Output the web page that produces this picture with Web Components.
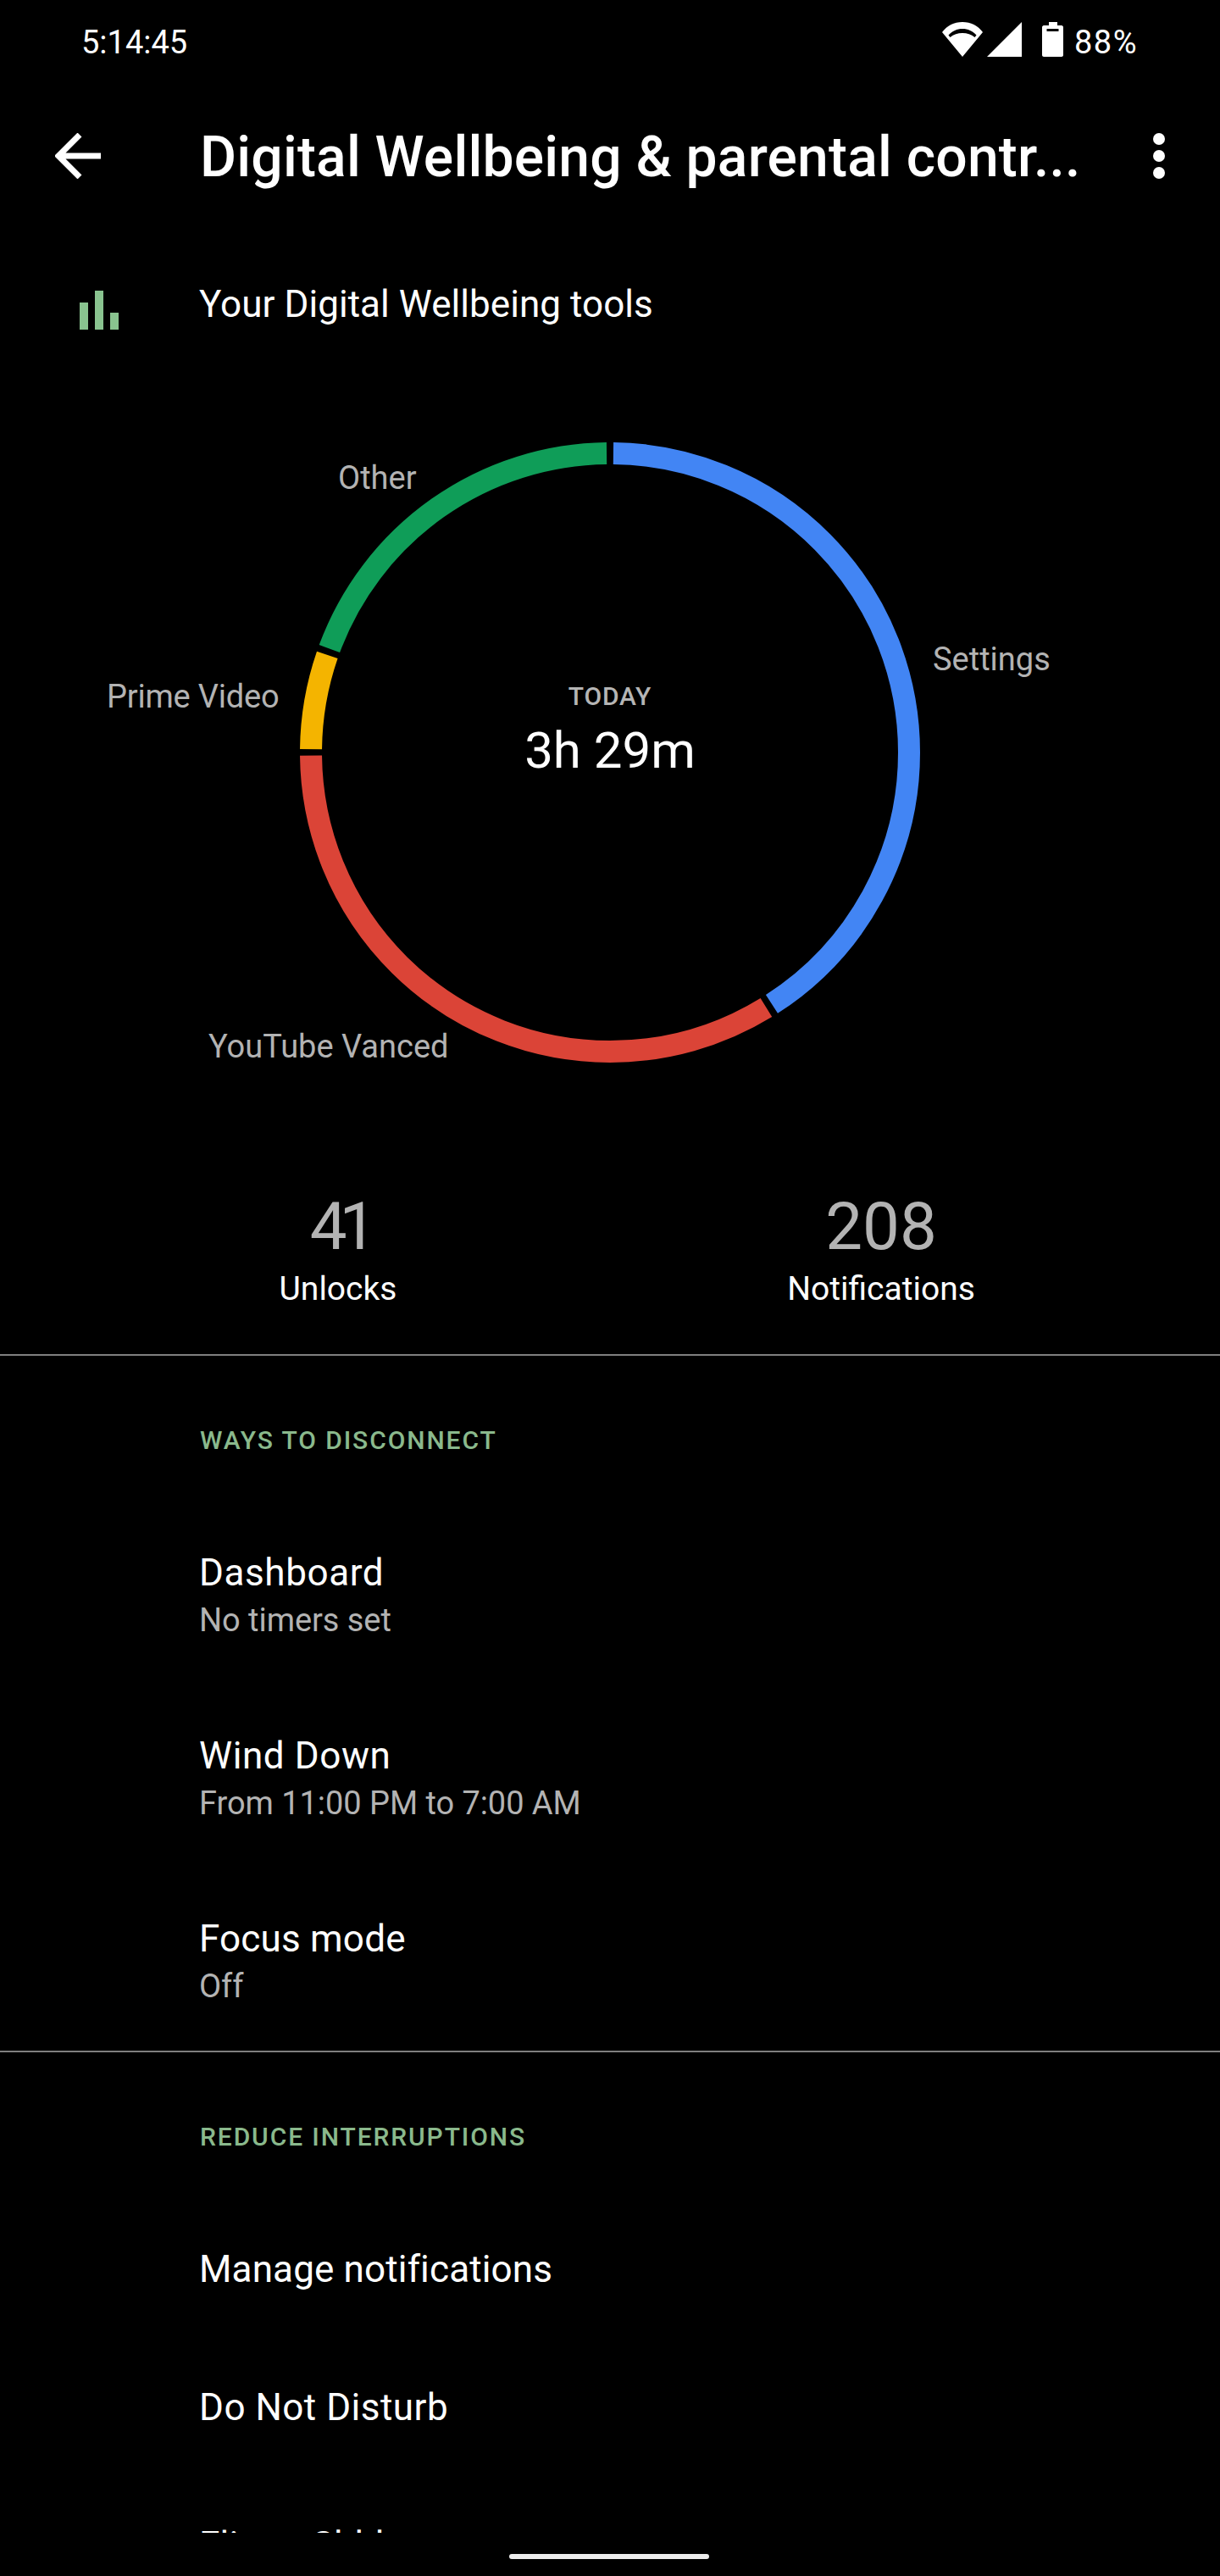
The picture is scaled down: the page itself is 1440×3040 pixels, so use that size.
<!DOCTYPE html>
<html><head><meta charset="utf-8"><style>
html,body{margin:0;padding:0;background:#000;}
body{width:1440px;height:3040px;overflow:hidden;font-family:Roboto,sans-serif;color:#fff;}
</style></head><body>
<app-screen>
<status-bar></status-bar>
<app-bar title-text="Digital Wellbeing &amp; parental contr..."></app-bar>
<tools-header></tools-header>
<usage-ring></usage-ring>
<stat-row></stat-row>
<section-block heading="WAYS TO DISCONNECT">
<setting-row title="Dashboard" sub="No timers set" style="--ls:.6px"></setting-row>
<setting-row title="Wind Down" sub="From 11:00 PM to 7:00 AM" style="--ls:.6px"></setting-row>
<setting-row title="Focus mode" sub="Off"></setting-row>
</section-block>
<section-block heading="REDUCE INTERRUPTIONS">
<setting-row title="Manage notifications" style="--ls:.15px"></setting-row>
<setting-row title="Do Not Disturb" style="--ls:.5px"></setting-row>
<setting-row title="Flip to Shhh"></setting-row>
</section-block>
</app-screen>
<script>
function def(name, html){
  customElements.define(name, class extends HTMLElement{
    connectedCallback(){
      if(this.shadowRoot) return;
      const r=this.attachShadow({mode:'open'});
      r.innerHTML = typeof html==='function'?html(this):html;
    }
  });
}
const esc=s=>String(s||'').replace(/&/g,'&amp;').replace(/</g,'&lt;');
def('app-screen',`<style>:host{display:block;width:1440px;height:3040px;position:relative;overflow:hidden;background:#000}
.clip{height:2989px;overflow:hidden}
.pill{position:absolute;left:601px;top:3014px;width:236px;height:6px;border-radius:3px;background:#ececec}
</style><div class="clip"><slot></slot></div><div class="pill"></div>`);
def('status-bar',`<style>:host{display:flex;align-items:center;justify-content:space-between;height:100px;padding:0 97px 0 96px;box-sizing:border-box;font:400 38px/1 Roboto,sans-serif;color:#fff}
.r{display:flex;align-items:center}
svg{display:block;margin-bottom:7px}
.p{letter-spacing:1.500px}
</style><span>5:14:45</span><div class="r">
<svg width="48" height="41" viewBox="0 0 48 41" style="margin-right:5px"><path fill="#fff" fill-rule="evenodd" d="M24 41 0 12C6 4 14 0 24 0S42 4 48 12ZM7.500 15.500C12 10.500 17.500 8 24 8S36 10.500 40.500 15.500L38.500 18C34.500 14.500 29.500 13 24 13S13.500 14.500 9.500 18Z"/></svg>
<svg width="41" height="41" viewBox="0 0 41 41" style="margin-right:24px"><path fill="#fff" d="M41 0v41H0Z"/></svg>
<svg width="25" height="41" viewBox="0 0 25 41" style="margin-right:13px"><path fill="#fff" fill-rule="evenodd" d="M8 0h10v4h5c1 0 2 1 2 2v33c0 1-1 2-2 2H2c-1 0-2-1-2-2V6c0-1 1-2 2-2h6ZM5.500 8v3h14V8Z"/></svg>
<span class="p">88%</span></div>`);
def('app-bar',e=>`<style>:host{display:flex;align-items:center;height:168px;box-sizing:border-box}
.back{margin-left:65px;flex:none;display:block}
.t{margin-left:117px;font:500 66px/1 Roboto,sans-serif;letter-spacing:.2px;white-space:nowrap;flex:1;padding-top:4px}
.more{flex:none;margin-right:64px;display:block}
</style>
<svg class="back" width="54" height="54" viewBox="0 0 54 54"><path fill="none" stroke="#fff" stroke-width="7" d="M54 27H5M29 2 4 27l25 25"/></svg>
<span class="t">${esc(e.getAttribute('title-text'))}</span>
<svg class="more" width="16" height="54" viewBox="0 0 16 54"><circle cx="8" cy="7" r="7" fill="#fff"/><circle cx="8" cy="27" r="7" fill="#fff"/><circle cx="8" cy="47" r="7" fill="#fff"/></svg>`);
def('tools-header',`<style>:host{display:flex;height:150px;align-items:flex-start}
svg{margin:75px 0 0 94px;display:block;flex:none}
span{margin:45px 0 0 95px;font:400 44px/92px Roboto,sans-serif;letter-spacing:.05px}
</style><svg width="46" height="46" viewBox="0 0 46 46"><rect x="0" y="14" width="10" height="32" fill="#89c38f"/><rect x="18" y="0" width="10" height="46" fill="#89c38f"/><rect x="36" y="26" width="10" height="20" fill="#89c38f"/></svg><span>Your Digital Wellbeing tools</span>`);
def('usage-ring',`<style>:host{display:block;position:relative;height:960px}
svg{position:absolute;left:0;top:0;display:block}
.l{position:absolute;font:400 38px/44px Roboto,sans-serif;color:#b3b3b3;white-space:nowrap}
.c{position:absolute;left:0;width:1440px;text-align:center}
.today{top:387px;font:500 30px/34px Roboto,sans-serif;color:#b5b5b5;letter-spacing:.8px}
.time{top:433px;font:400 60px/70px Roboto,sans-serif;color:#fff}
</style>
<svg width="1440" height="960" viewBox="0 0 1440 960">
<g fill="none" stroke-width="26" transform="rotate(-90 720 470)">
<circle cx="720" cy="470" r="353" pathLength="360" stroke="#4285f4" stroke-dasharray="146.6 213.4" stroke-dashoffset="-0.65"/>
<circle cx="720" cy="470" r="353" pathLength="360" stroke="#db4437" stroke-dasharray="120.9 239.1" stroke-dashoffset="-148.5"/>
<circle cx="720" cy="470" r="353" pathLength="360" stroke="#f4b400" stroke-dasharray="18.4 341.6" stroke-dashoffset="-270.65"/>
<circle cx="720" cy="470" r="353" pathLength="360" stroke="#0f9d58" stroke-dasharray="69.05 290.95" stroke-dashoffset="-290.3"/>
</g></svg>
<span class="l" style="left:399px;top:124px">Other</span>
<span class="l" style="left:1101px;top:338px">Settings</span>
<span class="l" style="left:126px;top:382px;letter-spacing:-.2px">Prime Video</span>
<span class="l" style="left:246px;top:795px">YouTube Vanced</span>
<div class="c today">TODAY</div><div class="c time">3h 29m</div>`);
def('stat-row',`<style>:host{display:block;height:220px;border-bottom:2px solid #7f7f7f;position:relative}
.s{position:absolute;top:30px;width:400px;text-align:center}
.n{font:400 78px/80px Roboto,sans-serif;color:#b3b3b3}
.k{font:400 39px/44px Roboto,sans-serif;color:#fff;margin-top:11px}
</style><div class="s" style="left:199px"><div class="n" style="letter-spacing:-9px;padding-left:3px">41</div><div class="k">Unlocks</div></div>
<div class="s" style="left:840px"><div class="n">208</div><div class="k">Notifications</div></div>`);
def('section-block',e=>`<style>:host{display:block;border-bottom:2px solid #7f7f7f}
:host(:last-child){border-bottom:0}
.h{padding:82px 0 0 236px;font:500 30px/36px Roboto,sans-serif;letter-spacing:1.900px;color:#8ab98c;margin-bottom:54px}
</style><div class="h">${esc(e.getAttribute('heading'))}</div><slot></slot>`);
def('setting-row',e=>{const s=e.getAttribute('sub');return `<style>:host{display:block;height:${s?216:163}px;box-sizing:border-box;padding:58px 0 0 235px}
.t{font:400 44px/52px Roboto,sans-serif;color:#fff;letter-spacing:var(--ls,.2px)}
.s{font:400 38px/44px Roboto,sans-serif;color:#b3b3b3;margin-top:8px;letter-spacing:-.05px}
</style><div class="t">${esc(e.getAttribute('title'))}</div>${s?`<div class="s">${esc(s)}</div>`:''}`});
</script></body></html>
